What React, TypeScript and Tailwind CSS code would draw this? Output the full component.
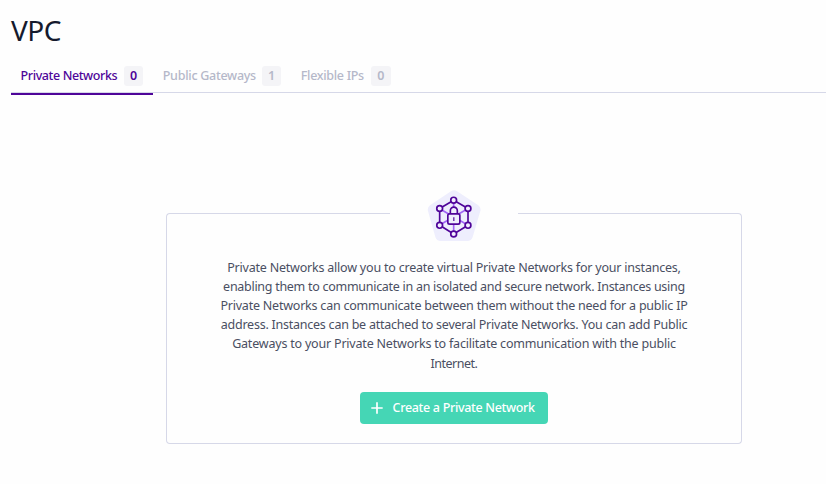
function Tab({ label, count, active, labelClass }: { label: string; count: number; active?: boolean; labelClass: string }) {
  return (
    <button
      className={
        "flex h-[38px] shrink-0 items-start pl-[9.6px] pr-[10px] pt-[9px] text-[12.5px] leading-5 " +
        (active ? "border-b-2 border-[#4f0599] text-[#4f0599]" : "text-[#b5b8c9]")
      }
    >
      <span className={"whitespace-nowrap text-left font-medium " + labelClass}>{label}</span>
      <span className="flex h-5 w-[19.4px] items-center justify-center rounded-[3px] bg-[#f4f4f7] font-semibold">{count}</span>
    </button>
  );
}

function NetworkLockIcon() {
  const nodes = [
    [116, 60.5],
    [159, 85.5],
    [159, 136],
    [116, 162],
    [74, 136],
    [74, 85.5],
  ];
  return (
    <svg className="h-[53px] w-[54px]" viewBox="36 27 162 159" fill="none">
      <path
        d="M108 34Q117 27 126 34L190 76Q199 83 196 93L173 171Q169 183 157 183H77Q65 183 61 171L39 93Q36 83 45 76Z"
        fill="#eeeefd"
      />
      <path d="M116 61V161M74 86L158 135M158 86L74 135" stroke="#a365f6" strokeWidth="5" />
      <path d="M116 60.5L159 85.5V136L116 162L74 136V85.5Z" stroke="#4f0599" strokeWidth="5" />
      {nodes.map(([x, y]) => (
        <circle key={`${x}-${y}`} cx={x} cy={y} r="8.7" fill="#f3f0ff" stroke="#4f0599" strokeWidth="5" />
      ))}
      <path d="M106 101V92a10.5 10.5 0 0 1 21 0V101" fill="#eeeefd" stroke="#4f0599" strokeWidth="5" />
      <rect x="98.5" y="101.5" width="36" height="31" rx="5" fill="#eeeefd" stroke="#4f0599" strokeWidth="5" />
      <path d="M116.5 112V123" stroke="#4f0599" strokeWidth="3.5" />
    </svg>
  );
}

const lines = [
  { text: "Private Networks allow you to create virtual Private Networks for your instances,", spacing: "tracking-[-0.21px]" },
  { text: "enabling them to communicate in an isolated and secure network. Instances using", spacing: "tracking-[-0.28px]" },
  { text: "Private Networks can communicate between them without the need for a public IP", spacing: "tracking-[-0.22px]" },
  { text: "address. Instances can be attached to several Private Networks. You can add Public", spacing: "tracking-[-0.24px]" },
  { text: "Gateways to your Private Networks to facilitate communication with the public", spacing: "tracking-[-0.2px]" },
  { text: "Internet.", spacing: "tracking-[-0.5px]" },
];

export default function App() {
  return (
    <main className="h-[484px] w-[826px] overflow-hidden bg-[#fefefe] pl-[11px] font-['Noto_Sans',sans-serif]">
      <h1 className="h-[57px] pt-[10px] text-[28px] leading-[40px] tracking-[-0.5px] text-[#151a2d]">VPC</h1>
      <nav className="flex h-9 border-b border-[#d6d8e8]">
        <Tab label="Private Networks" count={0} active labelClass="w-[103.2px] tracking-[-0.4px]" />
        <Tab label="Public Gateways" count={1} labelClass="w-[99px] tracking-[-0.27px]" />
        <Tab label="Flexible IPs" count={0} labelClass="w-[70.4px] tracking-[-0.3px]" />
      </nav>
      <section className="ml-[155px] mt-[96px] w-[576px]">
        <div className="flex h-[53px] items-end justify-between">
          <div className="h-[29px] w-[224px] rounded-tl border-l border-t border-[#d6d8e8]" />
          <NetworkLockIcon />
          <div className="h-[29px] w-[224px] rounded-tr border-r border-t border-[#d6d8e8]" />
        </div>
        <div className="flex h-[202px] flex-col items-center rounded-b border-x border-b border-[#d6d8e8] pt-[15.6px]">
          <p className="text-center text-[12.5px] leading-[19.2px] text-[#4a4f62]">
            {lines.map((line) => (
              <span key={line.text} className={"block whitespace-nowrap " + line.spacing}>
                {line.text}
              </span>
            ))}
          </p>
          <button className="mt-[19.2px] flex h-8 w-[188px] shrink-0 items-center rounded bg-[#45d6b5] pl-[10.6px] text-[12.5px] font-medium text-white">
            <svg className="mr-[10px] size-3" viewBox="0 0 12 12" stroke="currentColor" strokeWidth="1.7">
              <path d="M6 0.3V11.7M0.3 6H11.7" />
            </svg>
            <span className="whitespace-nowrap tracking-[-0.32px]">Create a Private Network</span>
          </button>
        </div>
      </section>
    </main>
  );
}
